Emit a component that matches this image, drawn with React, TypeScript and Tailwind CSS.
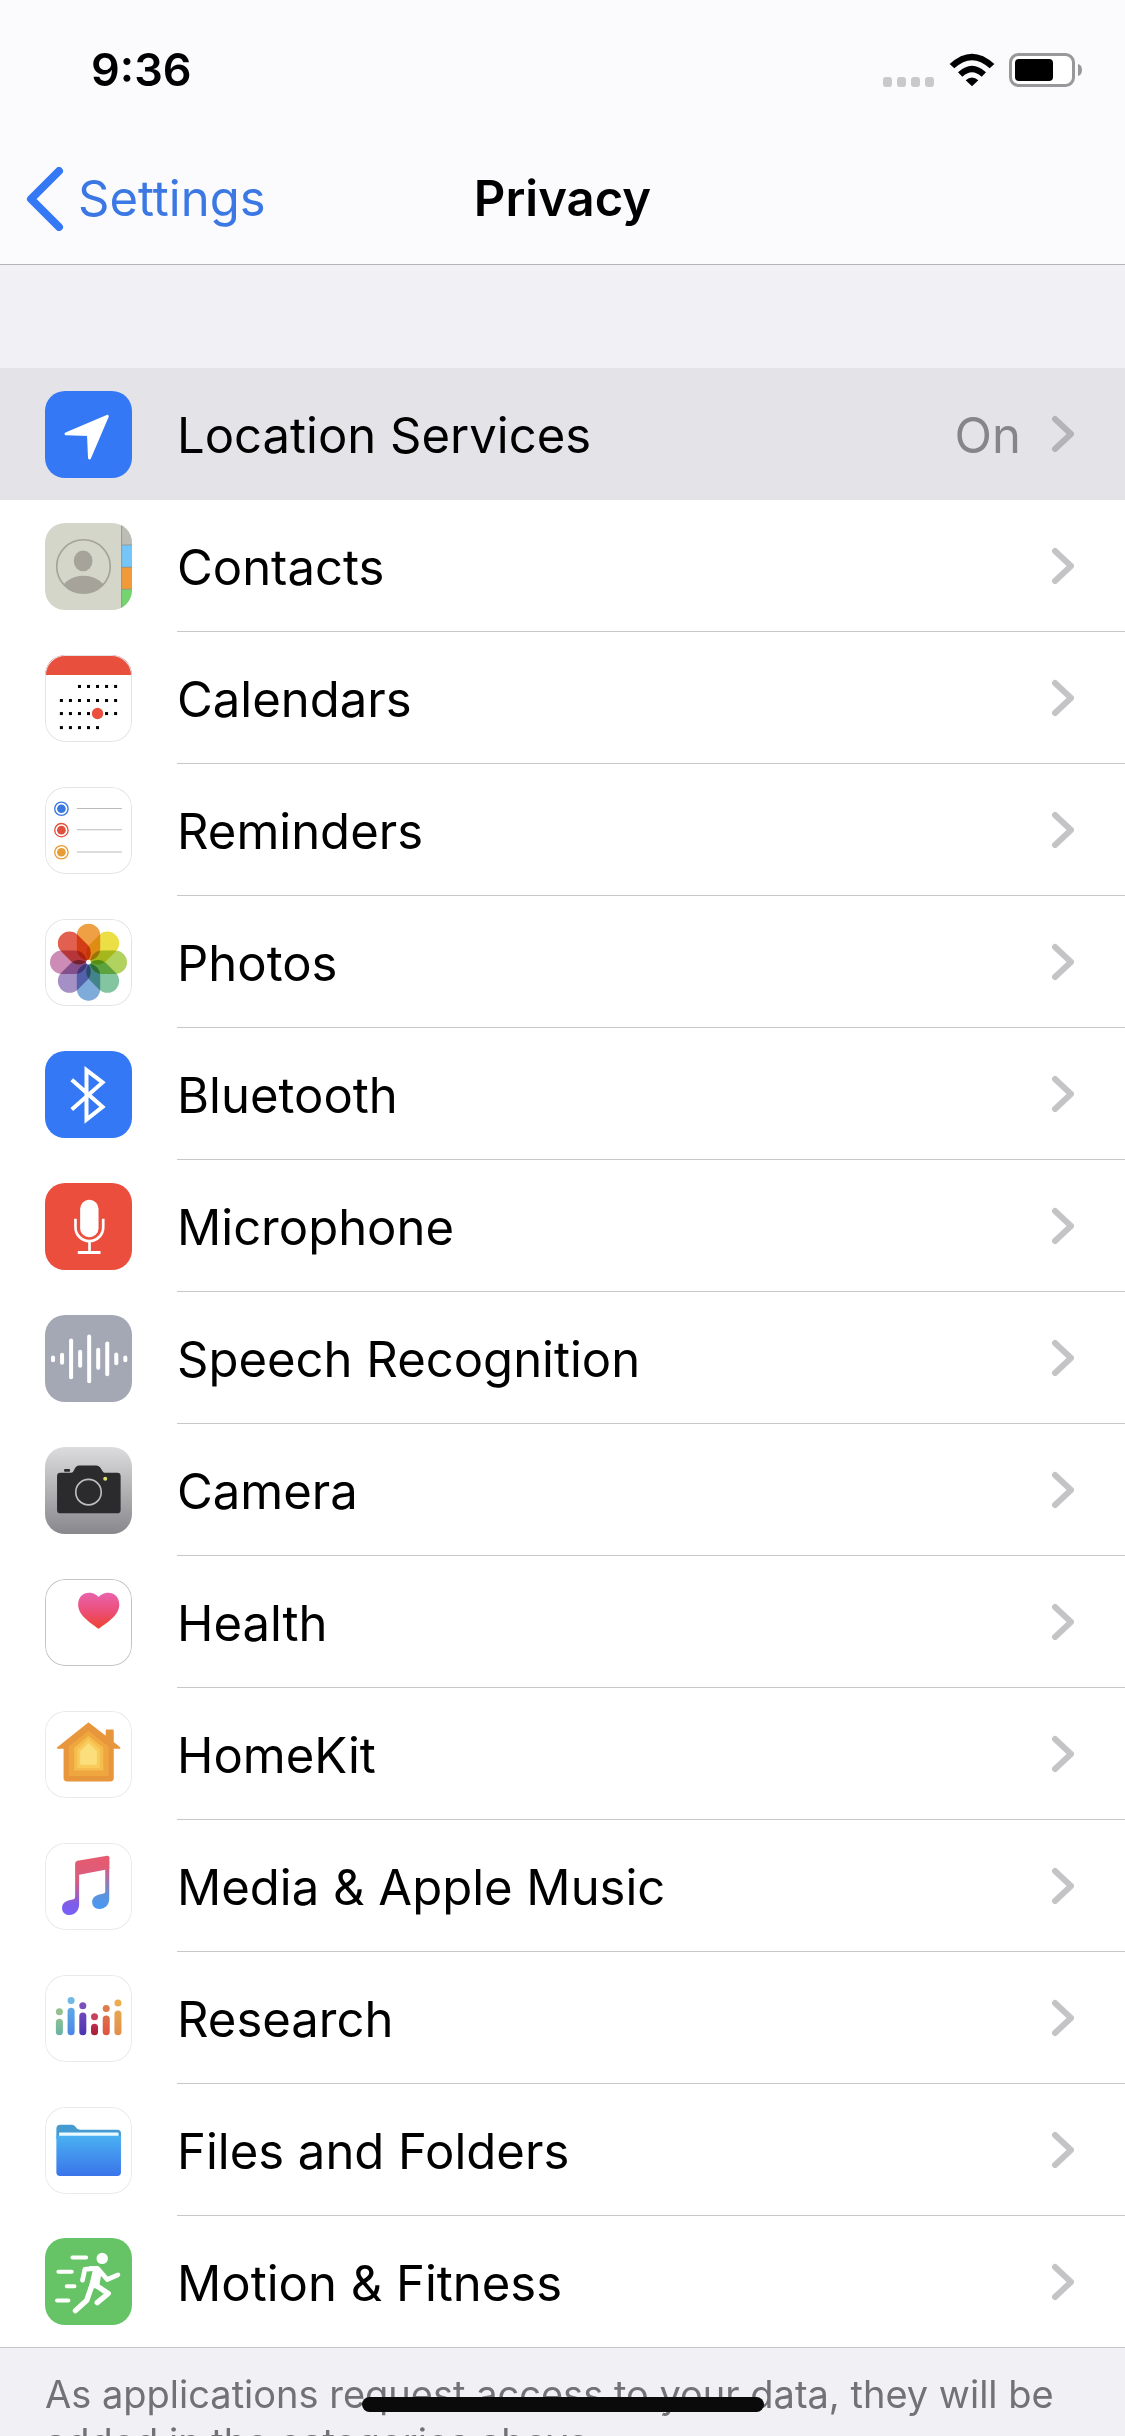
import type { ReactNode } from "react";

// Every app icon is drawn on a 260 x 260 grid.
function AppIcon({ bg = "#ffffff", border, children }: { bg?: string; border?: string; children: ReactNode }) {
  return (
    <svg viewBox="0 0 260 260" className="size-[87px] shrink-0 rounded-[20px]" aria-hidden="true">
      <rect width="260" height="260" fill={bg} />
      {children}
      {border && (
        <rect x="1.5" y="1.5" width="257" height="257" rx="59" fill="none" stroke={border} strokeWidth="3" />
      )}
    </svg>
  );
}

function LocationIcon() {
  return (
    <AppIcon bg="#3478f6">
      <path
        d="M63 128 186 76 133 200 130 130Z"
        fill="#fff"
        stroke="#fff"
        strokeWidth="9"
        strokeLinejoin="round"
      />
    </AppIcon>
  );
}

function ContactsIcon() {
  return (
    <AppIcon bg="#d5d6ca">
      <rect x="229" y="0" width="31" height="66" fill="#bdbdb6" />
      <rect x="229" y="66" width="31" height="66" fill="#74c5fa" />
      <rect x="229" y="132" width="31" height="66" fill="#f19a37" />
      <rect x="229" y="198" width="31" height="62" fill="#74d56f" />
      <path d="M229 66h31M229 132h31M229 198h31" stroke="#7d8580" strokeWidth="3" opacity=".6" />
      <path d="M229 0v260" stroke="#96968c" strokeWidth="3" />
      <clipPath id="contact-face">
        <circle cx="115" cy="130" r="80" />
      </clipPath>
      <circle cx="115" cy="130" r="80" fill="none" stroke="#a5a39a" strokeWidth="5" />
      <ellipse cx="114" cy="113" rx="28" ry="31" fill="#a5a39a" />
      <ellipse cx="115" cy="204" rx="66" ry="46" fill="#a5a39a" clipPath="url(#contact-face)" />
    </AppIcon>
  );
}

const calendarRows = [
  { y: 94, from: 2, to: 6 },
  { y: 136, from: 0, to: 6 },
  { y: 175, from: 0, to: 6 },
  { y: 217, from: 0, to: 4 },
];

function CalendarIcon() {
  return (
    <AppIcon border="#e4e4e6">
      {calendarRows.map((row) =>
        Array.from({ length: row.to - row.from + 1 }, (_, i) => (
          <rect
            key={`${row.y}-${i}`}
            x={49 + (row.from + i) * 27 - 4.5}
            y={row.y - 4.5}
            width="9"
            height="9"
            fill="#000"
          />
        ))
      )}
      <circle cx="157" cy="175" r="17" fill="#e94f3d" />
      <path d="M0 60V58A58 58 0 0 1 58 0H202A58 58 0 0 1 260 58V60Z" fill="#e94f3d" />
    </AppIcon>
  );
}

const reminderDots = [
  { y: 65, color: "#3a78e0" },
  { y: 129, color: "#e1503f" },
  { y: 195, color: "#e79d35" },
];

function RemindersIcon() {
  return (
    <AppIcon border="#e4e4e6">
      {reminderDots.map((dot) => (
        <g key={dot.y}>
          <circle cx="49" cy={dot.y} r="13" fill={dot.color} />
          <circle cx="49" cy={dot.y} r="20" fill="none" stroke={dot.color} strokeWidth="4" />
          <path d={`M95 ${dot.y - 1}H230`} stroke="#bcbcbe" strokeWidth="3" />
        </g>
      ))}
    </AppIcon>
  );
}

const petals = ["#f0a044", "#ecdf45", "#b2d260", "#84c5a1", "#7eabda", "#a590c6", "#cc8cb6", "#e2604f"];

function PhotosIcon() {
  return (
    <AppIcon border="#e4e4e6">
      <g className="isolate">
        {petals.map((color, i) => (
          <rect
            key={color}
            x="95"
            y="14"
            width="70"
            height="110"
            rx="35"
            fill={color}
            transform={`rotate(${i * 45} 130 129)`}
            className="mix-blend-multiply"
          />
        ))}
      </g>
      <circle cx="130" cy="129" r="7" fill="#fff" />
    </AppIcon>
  );
}

function BluetoothIcon() {
  return (
    <AppIcon bg="#3478f6">
      <path
        d="M80 86 172 167 124 205V57L172 94 80 175"
        fill="none"
        stroke="#fff"
        strokeWidth="12"
        strokeMiterlimit="10"
      />
    </AppIcon>
  );
}

function MicrophoneIcon() {
  return (
    <AppIcon bg="#eb4e3d">
      <rect x="105" y="50" width="55" height="112" rx="27" fill="#fff" />
      <path d="M91 107V132A41.5 41.5 0 0 0 174 132V107M133 173V208" fill="none" stroke="#fff" strokeWidth="8" />
      <path d="M98 208H166" stroke="#fff" strokeWidth="9" />
    </AppIcon>
  );
}

const waveform = [4, 12, 55, 21, 67, 27, 46, 13, 4];

function SpeechIcon() {
  return (
    <AppIcon bg="#a3a8b4">
      {waveform.map((half, i) => (
        <path
          key={i}
          d={`M${24 + i * 27} ${131 - half}V${131 + half}`}
          stroke="#fff"
          strokeWidth="12"
          strokeLinecap="round"
        />
      ))}
    </AppIcon>
  );
}

function CameraIcon() {
  return (
    <AppIcon bg="url(#camera-bg)">
      <linearGradient id="camera-bg" x1="0" y1="0" x2="0" y2="1">
        <stop offset="0" stopColor="#dcdcde" />
        <stop offset="1" stopColor="#88888c" />
      </linearGradient>
      <path
        d="M46 77H78C86 77 86 66 93 59Q97 55 103 55H153Q160 55 165 61C171 69 172 77 181 77H216Q226 77 226 87V188Q226 198 216 198H46Q36 198 36 188V87Q36 77 46 77Z"
        fill="#2b2b2d"
      />
      <rect x="57" y="66" width="18" height="8" rx="3" fill="#2b2b2d" />
      <circle cx="130" cy="135" r="38" fill="none" stroke="#bdbdbf" strokeWidth="5" />
      <circle cx="180" cy="95" r="6" fill="#dde06a" />
    </AppIcon>
  );
}

function HealthIcon() {
  return (
    <AppIcon border="#c4c4c6">
      <linearGradient id="heart" x1="0" y1="0" x2="0" y2="1">
        <stop offset="0" stopColor="#e963ae" />
        <stop offset=".5" stopColor="#ec4f78" />
        <stop offset="1" stopColor="#ee4130" />
      </linearGradient>
      <path
        d="M160 149C143 134 99 112 99 76C99 54 114 41 132 41C146 41 155 48 160 54C166 48 175 41 189 41C207 41 222 54 222 76C222 112 178 134 160 149Z"
        fill="url(#heart)"
      />
    </AppIcon>
  );
}

function HomeIcon() {
  return (
    <AppIcon border="#e9e9eb">
      <path
        d="M130 37 38 110H58V200Q58 208 66 208H195Q203 208 203 200V110H223L203 94V58H184V79Z"
        fill="#e8963c"
        stroke="#e8963c"
        strokeWidth="5"
        strokeLinejoin="round"
      />
      <path d="M130 59 71 106V194H190V106Z" fill="#f0a63f" />
      <path d="M130 74 87 110V178H174V110Z" fill="#f5bd4e" />
      <path d="M130 84 97 114V170H164V114Z" fill="#f8cb5a" />
      <path d="M130 96 105 120V161H155V120Z" fill="#fbdf7c" />
    </AppIcon>
  );
}

function MusicIcon() {
  return (
    <AppIcon border="#e9e9eb">
      <linearGradient id="note-left" gradientUnits="userSpaceOnUse" x1="0" y1="50" x2="0" y2="215">
        <stop offset="0" stopColor="#e55b70" />
        <stop offset=".4" stopColor="#d85d82" />
        <stop offset=".8" stopColor="#7d5de8" />
        <stop offset="1" stopColor="#7a60fa" />
      </linearGradient>
      <linearGradient id="note-right" gradientUnits="userSpaceOnUse" x1="0" y1="40" x2="0" y2="195">
        <stop offset="0" stopColor="#e55b70" />
        <stop offset=".3" stopColor="#c8628f" />
        <stop offset=".75" stopColor="#5b93de" />
        <stop offset="1" stopColor="#4a98f4" />
      </linearGradient>
      <path
        d="M192 42V166C192 186 179 197 163 197C149 197 141 188 141 177C141 163 151 157 162 154L175 151C179 150 180 148 180 144V60Z"
        fill="url(#note-right)"
      />
      <path
        d="M90 62Q90 55 97 53L186 38Q192 37 192 43V78L102 95V182C102 202 89 215 73 215C59 215 51 206 51 194C51 181 61 174 72 171L85 168C89 167 90 164 90 160Z"
        fill="url(#note-left)"
      />
    </AppIcon>
  );
}

const researchBars = [
  { dot: 110, top: 131, dotColor: "#93c08f", from: "#8bbf92", to: "#67b3a5" },
  { dot: 76, top: 98, dotColor: "#73b7e6", from: "#5fa9e6", to: "#4a86e4" },
  { dot: 92, top: 112, dotColor: "#7b50bd", from: "#7048bc", to: "#4a35ae" },
  { dot: 125, top: 146, dotColor: "#c6425f", from: "#bf2d50", to: "#a81c35" },
  { dot: 100, top: 121, dotColor: "#dd7c4d", from: "#dd704a", to: "#df5440" },
  { dot: 84, top: 106, dotColor: "#ecad4f", from: "#e5a750", to: "#e38e4b" },
];

function ResearchIcon() {
  return (
    <AppIcon border="#e9e9eb">
      {researchBars.map((bar, i) => (
        <g key={i}>
          <linearGradient id={`research-${i}`} x1="0" y1="0" x2="0" y2="1">
            <stop offset="0" stopColor={bar.from} />
            <stop offset="1" stopColor={bar.to} />
          </linearGradient>
          <circle cx={43 + i * 35} cy={bar.dot} r="10.5" fill={bar.dotColor} />
          <rect
            x={32.5 + i * 35}
            y={bar.top}
            width="21"
            height={180 - bar.top}
            rx="10.5"
            fill={`url(#research-${i})`}
          />
        </g>
      ))}
    </AppIcon>
  );
}

function FilesIcon() {
  return (
    <AppIcon border="#e9e9eb">
      <linearGradient id="folder" x1="0" y1="0" x2="0" y2="1">
        <stop offset="0" stopColor="#4ab1f2" />
        <stop offset="1" stopColor="#3a74ea" />
      </linearGradient>
      <path
        d="M34 96V65Q34 53 46 53H80C92 53 92 68 106 68H216Q227 68 227 79V96Z"
        fill="#459bd0"
      />
      <rect x="42" y="76" width="178" height="16" rx="2" fill="#e8f9ff" />
      <path d="M34 86H227V195Q227 206 216 206H45Q34 206 34 195Z" fill="url(#folder)" />
    </AppIcon>
  );
}

function MotionIcon() {
  return (
    <AppIcon bg="#67c466">
      <g fill="none" stroke="#fff" strokeLinecap="round" strokeLinejoin="round">
        <path d="M82 58H123M40 101H80M65 144H88M36 187H70" strokeWidth="12" />
        <path d="M150 91 119 94 112 126M158 92 186 124 218 110" strokeWidth="14" />
        <path d="M150 140 189 166 156 193M139 145 125 186 91 217" strokeWidth="16" />
      </g>
      <path d="M132 84H158L170 98 161 150H130L142 100Z" fill="#fff" />
      <circle cx="171" cy="61" r="17" fill="#fff" />
    </AppIcon>
  );
}

type Row = { label: string; icon: ReactNode; value?: string };

const rows: Row[] = [
  { label: "Location Services", icon: <LocationIcon />, value: "On" },
  { label: "Contacts", icon: <ContactsIcon /> },
  { label: "Calendars", icon: <CalendarIcon /> },
  { label: "Reminders", icon: <RemindersIcon /> },
  { label: "Photos", icon: <PhotosIcon /> },
  { label: "Bluetooth", icon: <BluetoothIcon /> },
  { label: "Microphone", icon: <MicrophoneIcon /> },
  { label: "Speech Recognition", icon: <SpeechIcon /> },
  { label: "Camera", icon: <CameraIcon /> },
  { label: "Health", icon: <HealthIcon /> },
  { label: "HomeKit", icon: <HomeIcon /> },
  { label: "Media & Apple Music", icon: <MusicIcon /> },
  { label: "Research", icon: <ResearchIcon /> },
  { label: "Files and Folders", icon: <FilesIcon /> },
  { label: "Motion & Fitness", icon: <MotionIcon /> },
];

function StatusBar() {
  return (
    <div className="flex h-[133px] items-center justify-between pl-[91px] pr-[42px] pt-1.5">
      <span className="text-[45px] leading-[54px] font-semibold">9:36</span>
      <div className="flex items-center gap-[14px]">
        <svg viewBox="0 0 52 34" className="h-[34px] w-[52px]" aria-hidden="true">
          {[0, 14, 28, 42].map((x) => (
            <rect key={x} x={x} y="24" width="9" height="10" rx="3" fill="#c9c9cb" />
          ))}
        </svg>
        <svg viewBox="0 0 138 100" className="h-[34px] w-[46px]" aria-hidden="true">
          <path d="M2 32Q69 -30 136 32L122 45Q69 -4 16 45Z" />
          <path d="M27 57Q69 18 111 57L98 70Q69 43 40 70Z" />
          <path d="M50 81Q69 64 88 81L69 99Z" />
        </svg>
        <svg viewBox="0 0 74 34" className="h-[34px] w-[74px]" aria-hidden="true">
          <rect x="1.5" y="1.5" width="63" height="31" rx="8" fill="#fff" stroke="#98989a" strokeWidth="3" />
          <rect x="6" y="6" width="38" height="22" rx="4" />
          <path d="M69 11Q73 12 73 17T69 23Z" fill="#98989a" />
        </svg>
      </div>
    </div>
  );
}

function NavBar() {
  return (
    <div className="grid h-[132px] grid-cols-3 items-center border-b border-[#b4b4b8] px-[26px]">
      <button type="button" className="flex items-center gap-[14px] text-[#3b78e3]">
        <svg viewBox="0 0 38 64" className="h-16 w-[38px]" aria-hidden="true">
          <path
            d="M33 4 5 32 33 60"
            fill="none"
            stroke="#3478f6"
            strokeWidth="8"
            strokeLinecap="round"
            strokeLinejoin="round"
          />
        </svg>
        <span className="text-[49px] leading-[60px]">Settings</span>
      </button>
      <h1 className="text-center text-[49px] leading-[60px] font-semibold">Privacy</h1>
    </div>
  );
}

function ListRow({ row, index }: { row: Row; index: number }) {
  const selected = index === 0;
  const last = index === rows.length - 1;
  return (
    <li className={last ? "border-b border-[#c6c6c9]" : ""}>
      <button
        type="button"
        className={`flex w-full items-center gap-[45px] pl-[45px] text-left ${selected ? "bg-[#e4e4e8]" : "bg-white"}`}
      >
        {row.icon}
        <span
          className={`flex flex-1 items-center pr-[50px] ${
            last ? "h-[131px]" : selected ? "h-[132px]" : "h-[132px] border-b border-[#c8c8ca]"
          }`}
        >
          <span className="flex-1 pt-1 text-[49px] leading-[60px]">{row.label}</span>
          {row.value && <span className="pt-1 pr-[30px] text-[49px] leading-[60px] text-[#85858a]">{row.value}</span>}
          <svg viewBox="0 0 24 38" className="h-[38px] w-6" aria-hidden="true">
            <path
              d="M4 4 20 19 4 34"
              fill="none"
              stroke={selected ? "#b4b4b8" : "#c4c4c6"}
              strokeWidth="6"
              strokeLinecap="round"
              strokeLinejoin="round"
            />
          </svg>
        </span>
      </button>
    </li>
  );
}

export default function App() {
  return (
    <div className="relative flex h-screen flex-col overflow-hidden bg-[#f1f0f5] font-['Inter','Liberation_Sans',sans-serif] text-black">
      <header className="shrink-0 bg-[#fbfbfd]">
        <StatusBar />
        <NavBar />
      </header>

      <main className="min-h-0 flex-1 overflow-y-auto pt-[103px] [scrollbar-width:none]">
        <ul>
          {rows.map((row, i) => (
            <ListRow key={row.label} row={row} index={i} />
          ))}
        </ul>
        <p className="px-[45px] pt-[22px] text-[38px] leading-[48px] text-[#717176]">
          As applications request access to your data, they will be added in the categories above.
        </p>
      </main>

      <div className="absolute bottom-6 left-1/2 h-[15px] w-[402px] -translate-x-1/2 rounded-full bg-[#0a0a0a]" />
    </div>
  );
}
